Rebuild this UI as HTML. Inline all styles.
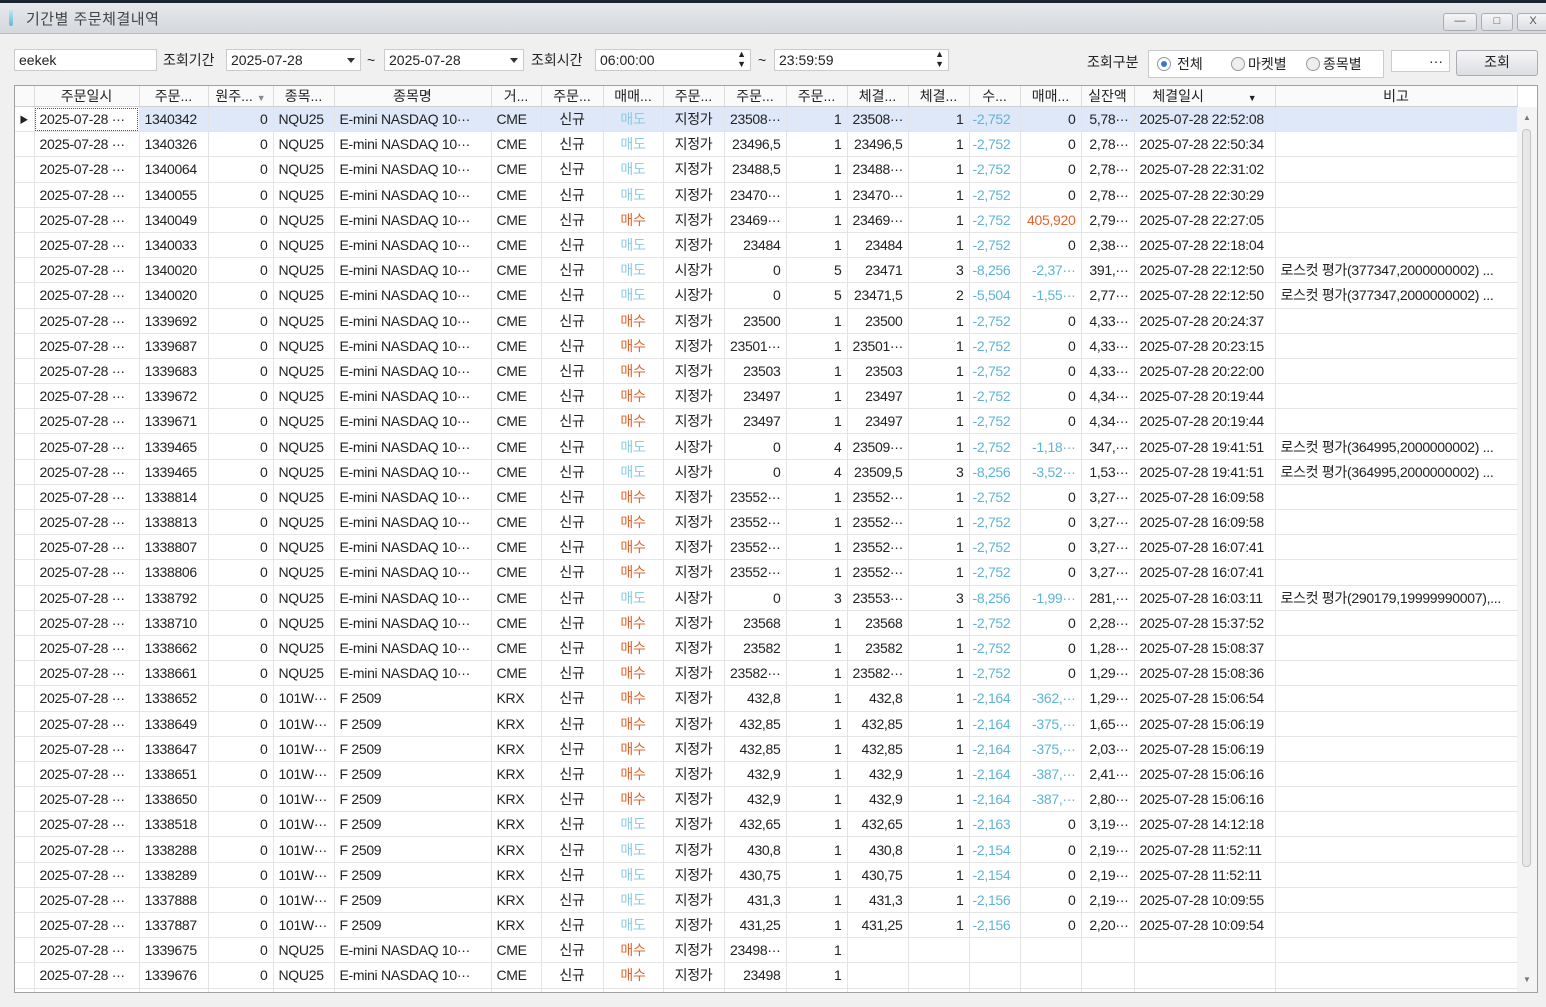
<!DOCTYPE html>
<html><head><meta charset="utf-8">
<style>
*{box-sizing:border-box;margin:0;padding:0}
body{width:1546px;height:1007px;background:#f0f0f0;font-family:"Liberation Sans","Noto Sans CJK KR",sans-serif;font-size:14px;color:#222;position:relative;overflow:hidden}
.topstrip{position:absolute;left:0;top:0;width:1546px;height:3px;background:#1b2433}
.title{position:absolute;left:0;top:3px;width:1546px;height:31px;background:linear-gradient(#e6e8ec,#d5d8dd);border-bottom:1px solid #b8bcc2}
.title span{position:absolute;left:26px;top:5px;font-size:15px;color:#444;letter-spacing:0.5px}
.title i{position:absolute;left:9px;top:7px;width:4px;height:16px;background:linear-gradient(#bfe4f5,#6ab6dc);border-radius:2px}
.wb{position:absolute;top:10px;height:18px;border:1px solid #a9adb3;border-radius:3px;background:linear-gradient(#f6f6f7,#dcdee1);font-size:11px;color:#555;text-align:center;line-height:15px}
.in{position:absolute;background:#fff;border:1px solid #c9cbce;height:22px;line-height:20px;padding-left:4px;font-size:14px}
.lb{position:absolute;font-size:14px;line-height:20px}
.arr{position:absolute;right:5px;top:8px;width:0;height:0;border-left:4px solid transparent;border-right:4px solid transparent;border-top:5px solid #333}
.grid{position:absolute;left:14px;top:85px;width:1524px;height:908px;border:1px solid #a0a0a0;background:#fff;overflow:hidden}
table{border-collapse:collapse;table-layout:fixed;width:1503px;position:absolute;left:-1px;top:0}
th{height:20px;font-weight:normal;background:#fafafa;border-right:1px solid #dcdcdc;border-bottom:1px solid #cfcfcf;text-align:center;white-space:nowrap;overflow:hidden;font-size:14px}
td{height:25.2px;border-right:1px solid #e4e4e4;border-bottom:1px solid #e4e4e4;white-space:nowrap;overflow:hidden;padding:0 5px;letter-spacing:-0.3px}
td:nth-child(1){background:#fff;padding:0}
td:nth-child(4),td:nth-child(10),td:nth-child(11),td:nth-child(12),td:nth-child(13),td:nth-child(14),td:nth-child(16),td:nth-child(17){text-align:right}
td:nth-child(8),td:nth-child(9),td:nth-child(10){text-align:center}
td:nth-child(15){padding-left:3px}
.s{color:#8ccbe0}.m{color:#e2642c}.b{color:#60b3d4}.o{color:#e2642c}
tr.sel td{background:#dfe8f8}
tr.sel td:nth-child(1){background:#fff}
tr.sel td:nth-child(2){background:#fff;outline:1px dotted #555;outline-offset:-2px}
.sb{position:absolute;left:1502px;top:21px;width:21px;height:886px;background:#f4f4f4}
</style></head><body>
<div class="topstrip"></div>
<div class="title"><i></i><span>기간별 주문체결내역</span>
<div class="wb" style="left:1443px;width:34px">—</div>
<div class="wb" style="left:1481px;width:32px">□</div>
<div class="wb" style="left:1517px;width:32px">X</div>
</div>

<div class="in" style="left:14px;top:49px;width:143px">eekek</div>
<div class="lb" style="left:163px;top:50px">조회기간</div>
<div class="in" style="left:226px;top:49px;width:135px">2025-07-28<span class="arr"></span></div>
<div class="lb" style="left:367px;top:50px">~</div>
<div class="in" style="left:384px;top:49px;width:140px">2025-07-28<span class="arr"></span></div>
<div class="lb" style="left:531px;top:50px">조회시간</div>
<div class="in" style="left:595px;top:49px;width:156px">06:00:00<span style="position:absolute;right:4px;top:-1px;font-size:9px;line-height:10px">▲<br>▼</span></div>
<div class="lb" style="left:758px;top:50px">~</div>
<div class="in" style="left:774px;top:49px;width:175px">23:59:59<span style="position:absolute;right:4px;top:-1px;font-size:9px;line-height:10px">▲<br>▼</span></div>
<div class="lb" style="left:1087px;top:52px">조회구분</div>
<div class="in" style="left:1148px;top:50px;width:236px;height:28px;padding:0">
<span style="position:absolute;left:8px;top:6px;width:14px;height:14px;border:1px solid #8a9bb0;border-radius:50%;background:#fff"><span style="position:absolute;left:3px;top:3px;width:6px;height:6px;border-radius:50%;background:#3a78d0"></span></span>
<span style="position:absolute;left:28px;top:3px">전체</span>
<span style="position:absolute;left:82px;top:6px;width:14px;height:14px;border:1px solid #999;border-radius:50%;background:#eee"></span>
<span style="position:absolute;left:99px;top:3px">마켓별</span>
<span style="position:absolute;left:157px;top:6px;width:14px;height:14px;border:1px solid #999;border-radius:50%;background:#eee"></span>
<span style="position:absolute;left:174px;top:3px">종목별</span>
</div>
<div class="in" style="left:1391px;top:50px;width:59px;text-align:right;padding-right:6px">···</div>
<div class="wb" style="left:1456px;top:50px;width:82px;height:26px;line-height:22px;font-size:14px;color:#222">조회</div>

<div class="grid">
<table>
<colgroup><col style="width:20px"><col style="width:105px"><col style="width:69px"><col style="width:65px"><col style="width:61px"><col style="width:157px"><col style="width:50px"><col style="width:62px"><col style="width:60px"><col style="width:61px"><col style="width:62px"><col style="width:61px"><col style="width:61px"><col style="width:61px"><col style="width:51px"><col style="width:61px"><col style="width:53px"><col style="width:141px"><col style="width:242px"></colgroup>
<tr><th></th><th>주문일시</th><th>주문...</th><th>원주... <span style="font-size:9px;color:#888">▼</span></th><th>종목...</th><th>종목명</th><th>거...</th><th>주문...</th><th>매매...</th><th>주문...</th><th>주문...</th><th>주문...</th><th>체결...</th><th>체결...</th><th>수...</th><th>매매...</th><th>실잔액</th><th>체결일시 <span style="font-size:9px;margin-left:40px">▼</span></th><th>비고</th></tr>
<tr class="sel"><td style="font-size:9px;text-align:center">▶</td><td>2025-07-28 ···</td><td>1340342</td><td>0</td><td>NQU25</td><td>E-mini NASDAQ 10···</td><td>CME</td><td>신규</td><td class="s">매도</td><td>지정가</td><td>23508···</td><td>1</td><td>23508···</td><td>1</td><td class="b">-2,752</td><td>0</td><td>5,78···</td><td>2025-07-28 22:52:08</td><td></td></tr>
<tr><td></td><td>2025-07-28 ···</td><td>1340326</td><td>0</td><td>NQU25</td><td>E-mini NASDAQ 10···</td><td>CME</td><td>신규</td><td class="s">매도</td><td>지정가</td><td>23496,5</td><td>1</td><td>23496,5</td><td>1</td><td class="b">-2,752</td><td>0</td><td>2,78···</td><td>2025-07-28 22:50:34</td><td></td></tr>
<tr><td></td><td>2025-07-28 ···</td><td>1340064</td><td>0</td><td>NQU25</td><td>E-mini NASDAQ 10···</td><td>CME</td><td>신규</td><td class="s">매도</td><td>지정가</td><td>23488,5</td><td>1</td><td>23488···</td><td>1</td><td class="b">-2,752</td><td>0</td><td>2,78···</td><td>2025-07-28 22:31:02</td><td></td></tr>
<tr><td></td><td>2025-07-28 ···</td><td>1340055</td><td>0</td><td>NQU25</td><td>E-mini NASDAQ 10···</td><td>CME</td><td>신규</td><td class="s">매도</td><td>지정가</td><td>23470···</td><td>1</td><td>23470···</td><td>1</td><td class="b">-2,752</td><td>0</td><td>2,78···</td><td>2025-07-28 22:30:29</td><td></td></tr>
<tr><td></td><td>2025-07-28 ···</td><td>1340049</td><td>0</td><td>NQU25</td><td>E-mini NASDAQ 10···</td><td>CME</td><td>신규</td><td class="m">매수</td><td>지정가</td><td>23469···</td><td>1</td><td>23469···</td><td>1</td><td class="b">-2,752</td><td class="o">405,920</td><td>2,79···</td><td>2025-07-28 22:27:05</td><td></td></tr>
<tr><td></td><td>2025-07-28 ···</td><td>1340033</td><td>0</td><td>NQU25</td><td>E-mini NASDAQ 10···</td><td>CME</td><td>신규</td><td class="s">매도</td><td>지정가</td><td>23484</td><td>1</td><td>23484</td><td>1</td><td class="b">-2,752</td><td>0</td><td>2,38···</td><td>2025-07-28 22:18:04</td><td></td></tr>
<tr><td></td><td>2025-07-28 ···</td><td>1340020</td><td>0</td><td>NQU25</td><td>E-mini NASDAQ 10···</td><td>CME</td><td>신규</td><td class="s">매도</td><td>시장가</td><td>0</td><td>5</td><td>23471</td><td>3</td><td class="b">-8,256</td><td class="b">-2,37···</td><td>391,···</td><td>2025-07-28 22:12:50</td><td>로스컷 평가(377347,2000000002) ...</td></tr>
<tr><td></td><td>2025-07-28 ···</td><td>1340020</td><td>0</td><td>NQU25</td><td>E-mini NASDAQ 10···</td><td>CME</td><td>신규</td><td class="s">매도</td><td>시장가</td><td>0</td><td>5</td><td>23471,5</td><td>2</td><td class="b">-5,504</td><td class="b">-1,55···</td><td>2,77···</td><td>2025-07-28 22:12:50</td><td>로스컷 평가(377347,2000000002) ...</td></tr>
<tr><td></td><td>2025-07-28 ···</td><td>1339692</td><td>0</td><td>NQU25</td><td>E-mini NASDAQ 10···</td><td>CME</td><td>신규</td><td class="m">매수</td><td>지정가</td><td>23500</td><td>1</td><td>23500</td><td>1</td><td class="b">-2,752</td><td>0</td><td>4,33···</td><td>2025-07-28 20:24:37</td><td></td></tr>
<tr><td></td><td>2025-07-28 ···</td><td>1339687</td><td>0</td><td>NQU25</td><td>E-mini NASDAQ 10···</td><td>CME</td><td>신규</td><td class="m">매수</td><td>지정가</td><td>23501···</td><td>1</td><td>23501···</td><td>1</td><td class="b">-2,752</td><td>0</td><td>4,33···</td><td>2025-07-28 20:23:15</td><td></td></tr>
<tr><td></td><td>2025-07-28 ···</td><td>1339683</td><td>0</td><td>NQU25</td><td>E-mini NASDAQ 10···</td><td>CME</td><td>신규</td><td class="m">매수</td><td>지정가</td><td>23503</td><td>1</td><td>23503</td><td>1</td><td class="b">-2,752</td><td>0</td><td>4,33···</td><td>2025-07-28 20:22:00</td><td></td></tr>
<tr><td></td><td>2025-07-28 ···</td><td>1339672</td><td>0</td><td>NQU25</td><td>E-mini NASDAQ 10···</td><td>CME</td><td>신규</td><td class="m">매수</td><td>지정가</td><td>23497</td><td>1</td><td>23497</td><td>1</td><td class="b">-2,752</td><td>0</td><td>4,34···</td><td>2025-07-28 20:19:44</td><td></td></tr>
<tr><td></td><td>2025-07-28 ···</td><td>1339671</td><td>0</td><td>NQU25</td><td>E-mini NASDAQ 10···</td><td>CME</td><td>신규</td><td class="m">매수</td><td>지정가</td><td>23497</td><td>1</td><td>23497</td><td>1</td><td class="b">-2,752</td><td>0</td><td>4,34···</td><td>2025-07-28 20:19:44</td><td></td></tr>
<tr><td></td><td>2025-07-28 ···</td><td>1339465</td><td>0</td><td>NQU25</td><td>E-mini NASDAQ 10···</td><td>CME</td><td>신규</td><td class="s">매도</td><td>시장가</td><td>0</td><td>4</td><td>23509···</td><td>1</td><td class="b">-2,752</td><td class="b">-1,18···</td><td>347,···</td><td>2025-07-28 19:41:51</td><td>로스컷 평가(364995,2000000002) ...</td></tr>
<tr><td></td><td>2025-07-28 ···</td><td>1339465</td><td>0</td><td>NQU25</td><td>E-mini NASDAQ 10···</td><td>CME</td><td>신규</td><td class="s">매도</td><td>시장가</td><td>0</td><td>4</td><td>23509,5</td><td>3</td><td class="b">-8,256</td><td class="b">-3,52···</td><td>1,53···</td><td>2025-07-28 19:41:51</td><td>로스컷 평가(364995,2000000002) ...</td></tr>
<tr><td></td><td>2025-07-28 ···</td><td>1338814</td><td>0</td><td>NQU25</td><td>E-mini NASDAQ 10···</td><td>CME</td><td>신규</td><td class="m">매수</td><td>지정가</td><td>23552···</td><td>1</td><td>23552···</td><td>1</td><td class="b">-2,752</td><td>0</td><td>3,27···</td><td>2025-07-28 16:09:58</td><td></td></tr>
<tr><td></td><td>2025-07-28 ···</td><td>1338813</td><td>0</td><td>NQU25</td><td>E-mini NASDAQ 10···</td><td>CME</td><td>신규</td><td class="m">매수</td><td>지정가</td><td>23552···</td><td>1</td><td>23552···</td><td>1</td><td class="b">-2,752</td><td>0</td><td>3,27···</td><td>2025-07-28 16:09:58</td><td></td></tr>
<tr><td></td><td>2025-07-28 ···</td><td>1338807</td><td>0</td><td>NQU25</td><td>E-mini NASDAQ 10···</td><td>CME</td><td>신규</td><td class="m">매수</td><td>지정가</td><td>23552···</td><td>1</td><td>23552···</td><td>1</td><td class="b">-2,752</td><td>0</td><td>3,27···</td><td>2025-07-28 16:07:41</td><td></td></tr>
<tr><td></td><td>2025-07-28 ···</td><td>1338806</td><td>0</td><td>NQU25</td><td>E-mini NASDAQ 10···</td><td>CME</td><td>신규</td><td class="m">매수</td><td>지정가</td><td>23552···</td><td>1</td><td>23552···</td><td>1</td><td class="b">-2,752</td><td>0</td><td>3,27···</td><td>2025-07-28 16:07:41</td><td></td></tr>
<tr><td></td><td>2025-07-28 ···</td><td>1338792</td><td>0</td><td>NQU25</td><td>E-mini NASDAQ 10···</td><td>CME</td><td>신규</td><td class="s">매도</td><td>시장가</td><td>0</td><td>3</td><td>23553···</td><td>3</td><td class="b">-8,256</td><td class="b">-1,99···</td><td>281,···</td><td>2025-07-28 16:03:11</td><td>로스컷 평가(290179,19999990007),...</td></tr>
<tr><td></td><td>2025-07-28 ···</td><td>1338710</td><td>0</td><td>NQU25</td><td>E-mini NASDAQ 10···</td><td>CME</td><td>신규</td><td class="m">매수</td><td>지정가</td><td>23568</td><td>1</td><td>23568</td><td>1</td><td class="b">-2,752</td><td>0</td><td>2,28···</td><td>2025-07-28 15:37:52</td><td></td></tr>
<tr><td></td><td>2025-07-28 ···</td><td>1338662</td><td>0</td><td>NQU25</td><td>E-mini NASDAQ 10···</td><td>CME</td><td>신규</td><td class="m">매수</td><td>지정가</td><td>23582</td><td>1</td><td>23582</td><td>1</td><td class="b">-2,752</td><td>0</td><td>1,28···</td><td>2025-07-28 15:08:37</td><td></td></tr>
<tr><td></td><td>2025-07-28 ···</td><td>1338661</td><td>0</td><td>NQU25</td><td>E-mini NASDAQ 10···</td><td>CME</td><td>신규</td><td class="m">매수</td><td>지정가</td><td>23582···</td><td>1</td><td>23582···</td><td>1</td><td class="b">-2,752</td><td>0</td><td>1,29···</td><td>2025-07-28 15:08:36</td><td></td></tr>
<tr><td></td><td>2025-07-28 ···</td><td>1338652</td><td>0</td><td>101W···</td><td>F 2509</td><td>KRX</td><td>신규</td><td class="m">매수</td><td>지정가</td><td>432,8</td><td>1</td><td>432,8</td><td>1</td><td class="b">-2,164</td><td class="b">-362,···</td><td>1,29···</td><td>2025-07-28 15:06:54</td><td></td></tr>
<tr><td></td><td>2025-07-28 ···</td><td>1338649</td><td>0</td><td>101W···</td><td>F 2509</td><td>KRX</td><td>신규</td><td class="m">매수</td><td>지정가</td><td>432,85</td><td>1</td><td>432,85</td><td>1</td><td class="b">-2,164</td><td class="b">-375,···</td><td>1,65···</td><td>2025-07-28 15:06:19</td><td></td></tr>
<tr><td></td><td>2025-07-28 ···</td><td>1338647</td><td>0</td><td>101W···</td><td>F 2509</td><td>KRX</td><td>신규</td><td class="m">매수</td><td>지정가</td><td>432,85</td><td>1</td><td>432,85</td><td>1</td><td class="b">-2,164</td><td class="b">-375,···</td><td>2,03···</td><td>2025-07-28 15:06:19</td><td></td></tr>
<tr><td></td><td>2025-07-28 ···</td><td>1338651</td><td>0</td><td>101W···</td><td>F 2509</td><td>KRX</td><td>신규</td><td class="m">매수</td><td>지정가</td><td>432,9</td><td>1</td><td>432,9</td><td>1</td><td class="b">-2,164</td><td class="b">-387,···</td><td>2,41···</td><td>2025-07-28 15:06:16</td><td></td></tr>
<tr><td></td><td>2025-07-28 ···</td><td>1338650</td><td>0</td><td>101W···</td><td>F 2509</td><td>KRX</td><td>신규</td><td class="m">매수</td><td>지정가</td><td>432,9</td><td>1</td><td>432,9</td><td>1</td><td class="b">-2,164</td><td class="b">-387,···</td><td>2,80···</td><td>2025-07-28 15:06:16</td><td></td></tr>
<tr><td></td><td>2025-07-28 ···</td><td>1338518</td><td>0</td><td>101W···</td><td>F 2509</td><td>KRX</td><td>신규</td><td class="s">매도</td><td>지정가</td><td>432,65</td><td>1</td><td>432,65</td><td>1</td><td class="b">-2,163</td><td>0</td><td>3,19···</td><td>2025-07-28 14:12:18</td><td></td></tr>
<tr><td></td><td>2025-07-28 ···</td><td>1338288</td><td>0</td><td>101W···</td><td>F 2509</td><td>KRX</td><td>신규</td><td class="s">매도</td><td>지정가</td><td>430,8</td><td>1</td><td>430,8</td><td>1</td><td class="b">-2,154</td><td>0</td><td>2,19···</td><td>2025-07-28 11:52:11</td><td></td></tr>
<tr><td></td><td>2025-07-28 ···</td><td>1338289</td><td>0</td><td>101W···</td><td>F 2509</td><td>KRX</td><td>신규</td><td class="s">매도</td><td>지정가</td><td>430,75</td><td>1</td><td>430,75</td><td>1</td><td class="b">-2,154</td><td>0</td><td>2,19···</td><td>2025-07-28 11:52:11</td><td></td></tr>
<tr><td></td><td>2025-07-28 ···</td><td>1337888</td><td>0</td><td>101W···</td><td>F 2509</td><td>KRX</td><td>신규</td><td class="s">매도</td><td>지정가</td><td>431,3</td><td>1</td><td>431,3</td><td>1</td><td class="b">-2,156</td><td>0</td><td>2,19···</td><td>2025-07-28 10:09:55</td><td></td></tr>
<tr><td></td><td>2025-07-28 ···</td><td>1337887</td><td>0</td><td>101W···</td><td>F 2509</td><td>KRX</td><td>신규</td><td class="s">매도</td><td>지정가</td><td>431,25</td><td>1</td><td>431,25</td><td>1</td><td class="b">-2,156</td><td>0</td><td>2,20···</td><td>2025-07-28 10:09:54</td><td></td></tr>
<tr><td></td><td>2025-07-28 ···</td><td>1339675</td><td>0</td><td>NQU25</td><td>E-mini NASDAQ 10···</td><td>CME</td><td>신규</td><td class="m">매수</td><td>지정가</td><td>23498···</td><td>1</td><td></td><td></td><td></td><td></td><td></td><td></td><td></td></tr>
<tr><td></td><td>2025-07-28 ···</td><td>1339676</td><td>0</td><td>NQU25</td><td>E-mini NASDAQ 10···</td><td>CME</td><td>신규</td><td class="m">매수</td><td>지정가</td><td>23498</td><td>1</td><td></td><td></td><td></td><td></td><td></td><td></td><td></td></tr>
<tr><td></td><td></td><td></td><td></td><td></td><td></td><td></td><td></td><td></td><td></td><td></td><td></td><td></td><td></td><td></td><td></td><td></td><td></td><td></td></tr>
</table>
<div class="sb">
<div style="position:absolute;left:6px;top:6px;font-size:8px;color:#777">▲</div>
<div style="position:absolute;left:5px;top:22px;width:9px;height:738px;border:1px solid #c4c4c4;border-radius:4px;background:#e8e8e8"></div>
<div style="position:absolute;left:6px;top:868px;font-size:8px;color:#777">▼</div>
</div>
</div>
</body></html>
